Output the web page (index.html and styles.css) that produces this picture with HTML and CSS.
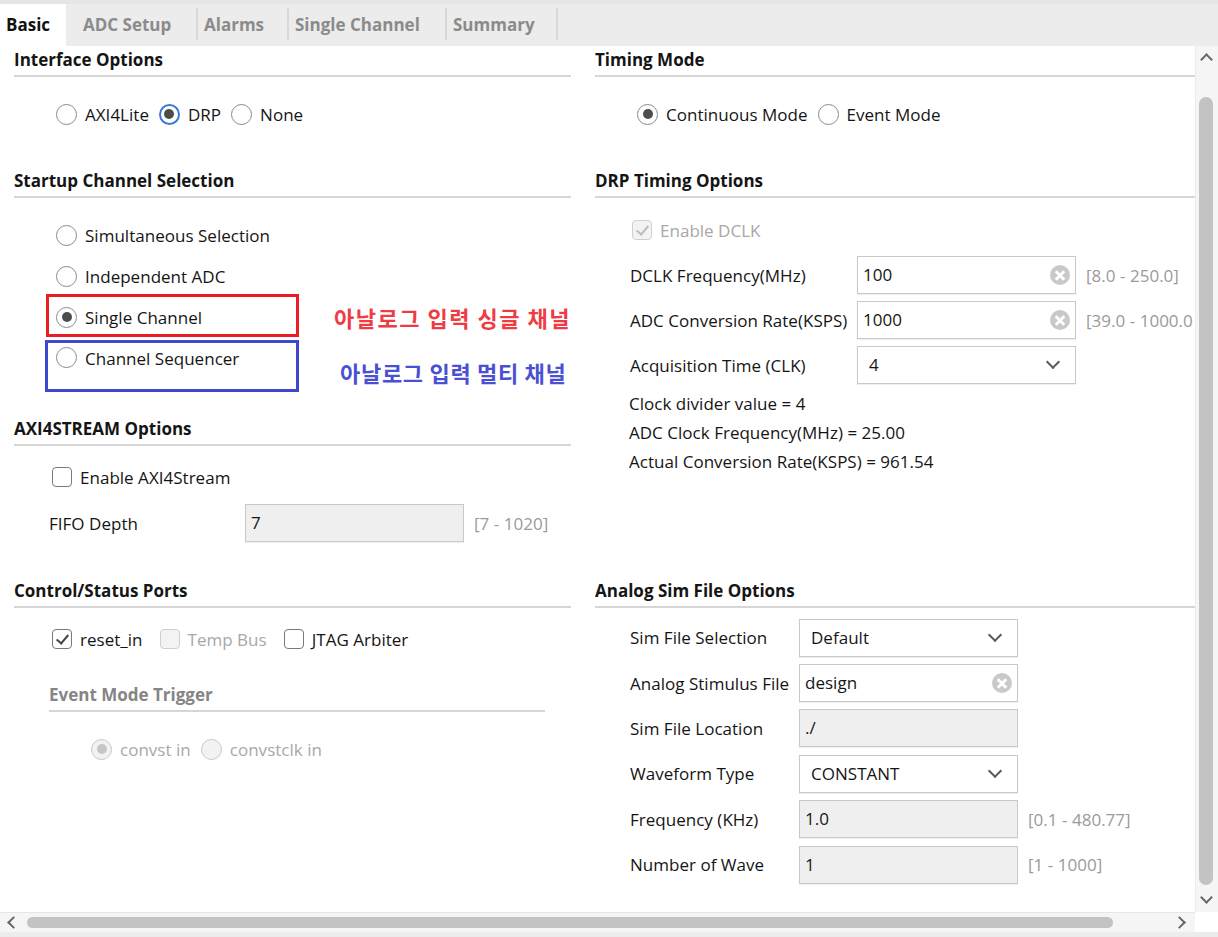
FILE: index.html
```html
<!DOCTYPE html>
<html>
<head>
<meta charset="utf-8">
<link rel="stylesheet" href="styles.css">
</head>
<body>
<div class="window">
  <div class="tabs">
    <div class="tab active">Basic</div>
    <div class="tab t-adc">ADC Setup</div>
    <div class="tab t-alarms">Alarms</div>
    <div class="tab t-single">Single Channel</div>
    <div class="tab t-summary">Summary</div>
  </div>
  <div class="main">
    <div class="content">
      <div class="grid">
        <!-- row 1 -->
        <div class="cell r1">
          <div class="heading">Interface Options</div>
          <div class="opts inline">
            <label class="opt"><span class="radio"></span>AXI4Lite</label>
            <label class="opt"><span class="radio on focus"></span>DRP</label>
            <label class="opt"><span class="radio"></span>None</label>
          </div>
        </div>
        <div class="cell r1">
          <div class="heading">Timing Mode</div>
          <div class="opts inline">
            <label class="opt"><span class="radio on"></span>Continuous Mode</label>
            <label class="opt"><span class="radio"></span>Event Mode</label>
          </div>
        </div>
        <!-- row 2 -->
        <div class="cell r2">
          <div class="heading">Startup Channel Selection</div>
          <div class="opts stack annotated">
            <label class="opt"><span class="radio"></span>Simultaneous Selection</label>
            <label class="opt"><span class="radio"></span>Independent ADC</label>
            <label class="opt"><span class="radio on"></span>Single Channel</label>
            <label class="opt seq"><span class="radio"></span>Channel Sequencer</label>
            <div class="note-box red-box"></div>
            <div class="note-box blue-box"></div>
            <div class="note red-note">아날로그 입력 싱글 채널</div>
            <div class="note blue-note">아날로그 입력 멀티 채널</div>
          </div>
          <div class="heading axi">AXI4STREAM Options</div>
          <div class="checks">
            <label class="chk-opt"><span class="check"></span>Enable AXI4Stream</label>
          </div>
          <div class="frow fifo">
            <span class="flabel">FIFO Depth</span>
            <span class="field disabled">7</span>
            <span class="range">[7 - 1020]</span>
          </div>
        </div>
        <div class="cell r2 right">
          <div class="heading">DRP Timing Options</div>
          <div class="dclk-row">
            <label class="chk-opt dim"><span class="check on dim"></span>Enable DCLK</label>
          </div>
          <div class="frow drp">
            <span class="flabel">DCLK Frequency(MHz)</span>
            <span class="field">100<span class="clear"></span></span>
            <span class="range">[8.0 - 250.0]</span>
          </div>
          <div class="frow drp">
            <span class="flabel">ADC Conversion Rate(KSPS)</span>
            <span class="field">1000<span class="clear"></span></span>
            <span class="range clipped">[39.0 - 1000.0</span>
          </div>
          <div class="frow drp">
            <span class="flabel">Acquisition Time (CLK)</span>
            <span class="field select">4<span class="chev"></span></span>
          </div>
          <div class="info">Clock divider value = 4</div>
          <div class="info">ADC Clock Frequency(MHz) = 25.00</div>
          <div class="info">Actual Conversion Rate(KSPS) = 961.54</div>
        </div>
        <!-- row 3 -->
        <div class="cell r3">
          <div class="heading">Control/Status Ports</div>
          <div class="checks inline">
            <label class="chk-opt"><span class="check on"></span>reset_in</label>
            <label class="chk-opt dim"><span class="check dim"></span>Temp Bus</label>
            <label class="chk-opt"><span class="check"></span>JTAG Arbiter</label>
          </div>
          <div class="subheading">Event Mode Trigger</div>
          <div class="opts inline sub">
            <label class="opt dim"><span class="radio on dim"></span>convst in</label>
            <label class="opt dim"><span class="radio dim"></span>convstclk in</label>
          </div>
        </div>
        <div class="cell r3 right">
          <div class="heading">Analog Sim File Options</div>
          <div class="sim">
            <div class="frow sim-row">
              <span class="flabel">Sim File Selection</span>
              <span class="field select">Default<span class="chev"></span></span>
            </div>
            <div class="frow sim-row">
              <span class="flabel">Analog Stimulus File</span>
              <span class="field plain">design<span class="clear"></span></span>
            </div>
            <div class="frow sim-row">
              <span class="flabel">Sim File Location</span>
              <span class="field disabled">./</span>
            </div>
            <div class="frow sim-row">
              <span class="flabel">Waveform Type</span>
              <span class="field select">CONSTANT<span class="chev"></span></span>
            </div>
            <div class="frow sim-row">
              <span class="flabel">Frequency (KHz)</span>
              <span class="field disabled">1.0</span>
              <span class="range">[0.1 - 480.77]</span>
            </div>
            <div class="frow sim-row">
              <span class="flabel">Number of Wave</span>
              <span class="field disabled">1</span>
              <span class="range">[1 - 1000]</span>
            </div>
          </div>
        </div>
      </div>
    </div>
    <div class="vscroll">
      <span class="arrow up"></span>
      <span class="vthumb"></span>
      <span class="arrow down"></span>
    </div>
  </div>
  <div class="hbar">
    <div class="hscroll">
      <span class="arrow left"></span>
      <span class="hthumb"></span>
      <span class="arrow right"></span>
    </div>
    <div class="corner"></div>
  </div>
</div>
</body>
</html>
```
FILE: styles.css
```css
* { box-sizing: border-box; }
html, body { margin: 0; padding: 0; }
body {
  width: 1218px;
  height: 937px;
  overflow: hidden;
  background: #ececec;
  font-family: "Open Sans", "Noto Sans", "Liberation Sans", sans-serif;
  font-size: 17px;
  letter-spacing: 0.02px;
  color: #151515;
}
.window { display: flex; flex-direction: column; height: 937px; }

/* tabs */
.tabs {
  height: 46px;
  border-top: 4px solid #e5e5e5;
  background: #ececec;
  display: flex;
  align-items: stretch;
  font-weight: 700;
  font-size: 17px;
  letter-spacing: 0;
}
.tab {
  color: #8b8b8b;
  line-height: 42px;
  position: relative;
}
.tab.active { background: #fff; color: #111; width: 66px; padding-left: 6px; }
.tab.t-adc { width: 132px; padding-left: 17px; }
.tab.t-alarms { width: 91px; padding-left: 6px; }
.tab.t-single { width: 158px; padding-left: 6px; }
.tab.t-summary { width: 111px; padding-left: 6px; }
.tab.t-adc, .tab.t-alarms, .tab.t-single, .tab.t-summary {
  border-right: 2px solid #d8d8d8;
  margin: 4px 0 6px;
  line-height: 34px;
}

/* main area */
.main { display: flex; height: 866px; }
.content {
  width: 1195px;
  height: 866px;
  background: #fff;
  overflow: hidden;
}
.grid {
  display: grid;
  grid-template-columns: 557px 600px;
  column-gap: 24px;
  padding-left: 14px;
  align-items: start;
}
.cell.r1 { height: 121px; }
.cell.r2 { height: 410px; }

.heading {
  font-weight: 700;
  font-size: 17px;
  letter-spacing: 0;
  line-height: 22px;
  padding-top: 3px;
  padding-bottom: 4px;
  border-bottom: 2px solid #d6d6d6;
  white-space: nowrap;
}
.heading.axi { margin-top: 36.5px; }
.subheading {
  margin-top: 21.5px;
  margin-left: 35px;
  width: 496px;
  font-weight: 700;
  font-size: 17px;
  letter-spacing: 0;
  line-height: 22px;
  padding-top: 3px;
  padding-bottom: 4px;
  border-bottom: 2px solid #d6d6d6;
  color: #858585;
}

/* options */
.opts { margin-top: 16.5px; padding-left: 42px; }
.opts.inline { display: flex; gap: 0; }
.opts.stack { display: flex; flex-direction: column; }
.opts.sub { padding-left: 77px; }
.opt {
  display: flex;
  align-items: center;
  height: 41px;
  white-space: nowrap;
  margin-right: 10px;
}
.opt.dim { color: #a8a8a8; }
.radio {
  width: 21px; height: 21px;
  border-radius: 50%;
  border: 1.5px solid #8a8a8a;
  background: #fff;
  margin-right: 8px;
  position: relative;
  flex: none;
}
.radio.on::after {
  content: "";
  position: absolute;
  left: 50%; top: 50%;
  width: 10px; height: 10px;
  margin: -5px 0 0 -5px;
  border-radius: 50%;
  background: #4d4d4d;
}
.radio.focus { border: 2.5px solid #3b78d8; }
.radio.dim { border-color: #c8c8c8; background: #f2f2f2; }
.radio.on.dim::after { background: #c6c6c6; }

.annotated { position: relative; }
.opt.seq { align-items: flex-start; padding-top: 9px; }
.note-box { position: absolute; }
.red-box {
  left: 32px; top: 79.5px; width: 253px; height: 43px;
  border: 3px solid #ec1c24;
}
.blue-box {
  left: 31px; top: 125.5px; width: 254px; height: 52px;
  border: 3px solid #3f48cc;
}
.note {
  position: absolute;
  font-family: "Noto Sans CJK KR", sans-serif;
  font-weight: 700;
  font-size: 22px;
  letter-spacing: 1.5px;
  line-height: 28px;
  white-space: nowrap;
}
.red-note { left: 320px; top: 88.5px; color: #ef3b43; }
.blue-note { left: 326px; top: 143.5px; color: #4a4fd3; letter-spacing: 0.7px; }

/* checkboxes */
.checks { margin-top: 10.5px; padding-left: 38px; }
.checks.inline { display: flex; }
.chk-opt {
  display: flex;
  align-items: center;
  height: 41px;
  white-space: nowrap;
  margin-right: 17px;
}
.chk-opt.dim { color: #a8a8a8; }
.check {
  width: 20px; height: 20px;
  border: 1.5px solid #7a7a7a;
  border-radius: 4px;
  margin-right: 8px;
  position: relative;
  flex: none;
  background: #fff;
}
.check.dim { border-color: #cfcfcf; background: #f3f3f3; }
.check.on::after {
  content: "";
  position: absolute;
  left: 5.5px; top: 1.5px;
  width: 5px; height: 10px;
  border-right: 2px solid #444;
  border-bottom: 2px solid #444;
  transform: rotate(40deg);
}
.check.on.dim::after { border-color: #bdbdbd; }

/* form rows */
.frow { display: flex; align-items: center; white-space: nowrap; }
.fifo { margin-top: 3px; height: 45px; padding-left: 35px; }
.fifo .flabel { width: 196px; }
.flabel { flex: none; }
.field {
  position: relative;
  flex: none;
  width: 219px;
  height: 38px;
  border: 1px solid #c9c9c9;
  background: #fff;
  padding-left: 5px;
  line-height: 36px;
  box-shadow: 0 1px 1px rgba(0,0,0,0.06);
}
.field.disabled { background: #efefef; }
.field.select { padding-left: 11px; }
.range { color: #9a9a9a; margin-left: 10px; }
.clear {
  position: absolute;
  right: 5px; top: 50%;
  width: 20px; height: 20px;
  margin-top: -10px;
  border-radius: 50%;
  background: #c9c9c9;
}
.clear::before, .clear::after {
  content: "";
  position: absolute;
  left: 4px; top: 8.5px;
  width: 12px; height: 3px;
  background: #fff;
  transform: rotate(45deg);
}
.clear::after { transform: rotate(-45deg); }
.chev {
  position: absolute;
  right: 17px; top: 50%;
  width: 10px; height: 10px;
  margin-top: -8px;
  border-right: 2.5px solid #585858;
  border-bottom: 2.5px solid #585858;
  transform: rotate(45deg);
}

.dclk-row { margin-top: 9.5px; padding-left: 37px; height: 45px; display: flex; align-items: center; }
.drp { height: 45px; padding-left: 35px; }
.drp .flabel { width: 227px; }
.info { padding-left: 34px; line-height: 29px; }
.drp + .info { margin-top: 1px; }

.sim { margin-top: 7px; }
.sim-row { height: 45.4px; padding-left: 35px; }
.sim-row .flabel { width: 169px; }

/* scrollbars */
.vscroll {
  width: 23px;
  height: 866px;
  background: #f5f5f5;
  border-left: 1px solid #ececec;
  position: relative;
}
.arrow {
  position: absolute;
  width: 9px; height: 9px;
  border-left: 2.5px solid #666;
  border-top: 2.5px solid #666;
}
.arrow.up { left: 6px; top: 9px; transform: rotate(45deg); }
.arrow.down { left: 6px; bottom: 10px; transform: rotate(225deg); }
.vthumb {
  position: absolute;
  left: 3px; top: 51px;
  width: 14px; height: 788px;
  border-radius: 7px;
  background: #c3c3c3;
}
.hbar { display: flex; height: 20px; }
.hscroll {
  width: 1195px;
  height: 20px;
  background: #f5f5f5;
  border-top: 1px solid #e6e6e6;
  position: relative;
}
.arrow.left { left: 9px; top: 5px; transform: rotate(-45deg); }
.arrow.right { right: 11px; top: 5px; transform: rotate(135deg); }
.hthumb {
  position: absolute;
  left: 27px; top: 4px;
  width: 1086px; height: 11px;
  border-radius: 6px;
  background: #c3c3c3;
}
.corner { width: 23px; height: 20px; background: #fff; }
```
